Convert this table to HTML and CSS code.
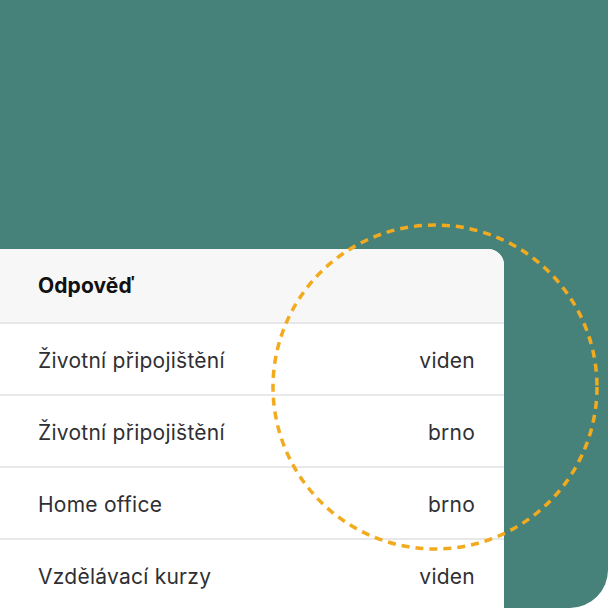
FILE: index.html
```html
<!DOCTYPE html>
<html lang="cs">
<head>
<meta charset="utf-8">
<link rel="stylesheet" href="styles.css">
</head>
<body>
<div class="panel">
  <div class="card">
    <div class="row head"><span class="label">Odpověď</span></div>
    <div class="row"><span class="label">Životní připojištění</span><span class="value">viden</span></div>
    <div class="row"><span class="label">Životní připojištění</span><span class="value">brno</span></div>
    <div class="row"><span class="label">Home office</span><span class="value">brno</span></div>
    <div class="row"><span class="label">Vzdělávací kurzy</span><span class="value">viden</span></div>
  </div>
  <svg class="ring" width="340" height="340" viewBox="0 0 340 340">
    <circle cx="170" cy="170" r="162" fill="none" stroke="#f2aa1e" stroke-width="3.5" stroke-dasharray="8 6"/>
  </svg>
</div>
</body>
</html>
```
FILE: styles.css
```css
html, body {
  margin: 0;
  padding: 0;
  background: #ffffff;
}
body {
  width: 608px;
  height: 608px;
  overflow: hidden;
  font-family: "Inter", "Noto Sans", sans-serif;
}
.panel {
  position: relative;
  width: 608px;
  height: 608px;
  background: #47827a;
  border-bottom-right-radius: 38px;
  padding-top: 249px;
  box-sizing: border-box;
  overflow: hidden;
}
.card {
  width: 504px;
  background: #ffffff;
  border-top-right-radius: 16px;
  overflow: hidden;
}
.row {
  height: 68px;
  display: flex;
  align-items: center;
  justify-content: space-between;
  padding: 2px 29px 0 38px;
  border-bottom: 2px solid #e8e8ea;
  font-size: 21px;
  letter-spacing: 0.25px;
  color: #2f2f33;
}
.row.head {
  height: 73px;
  padding-top: 0;
  background: #f7f7f7;
  font-weight: 700;
  letter-spacing: 0.1px;
  color: #111111;
}
.ring {
  position: absolute;
  left: 265px;
  top: 217px;
}
```
